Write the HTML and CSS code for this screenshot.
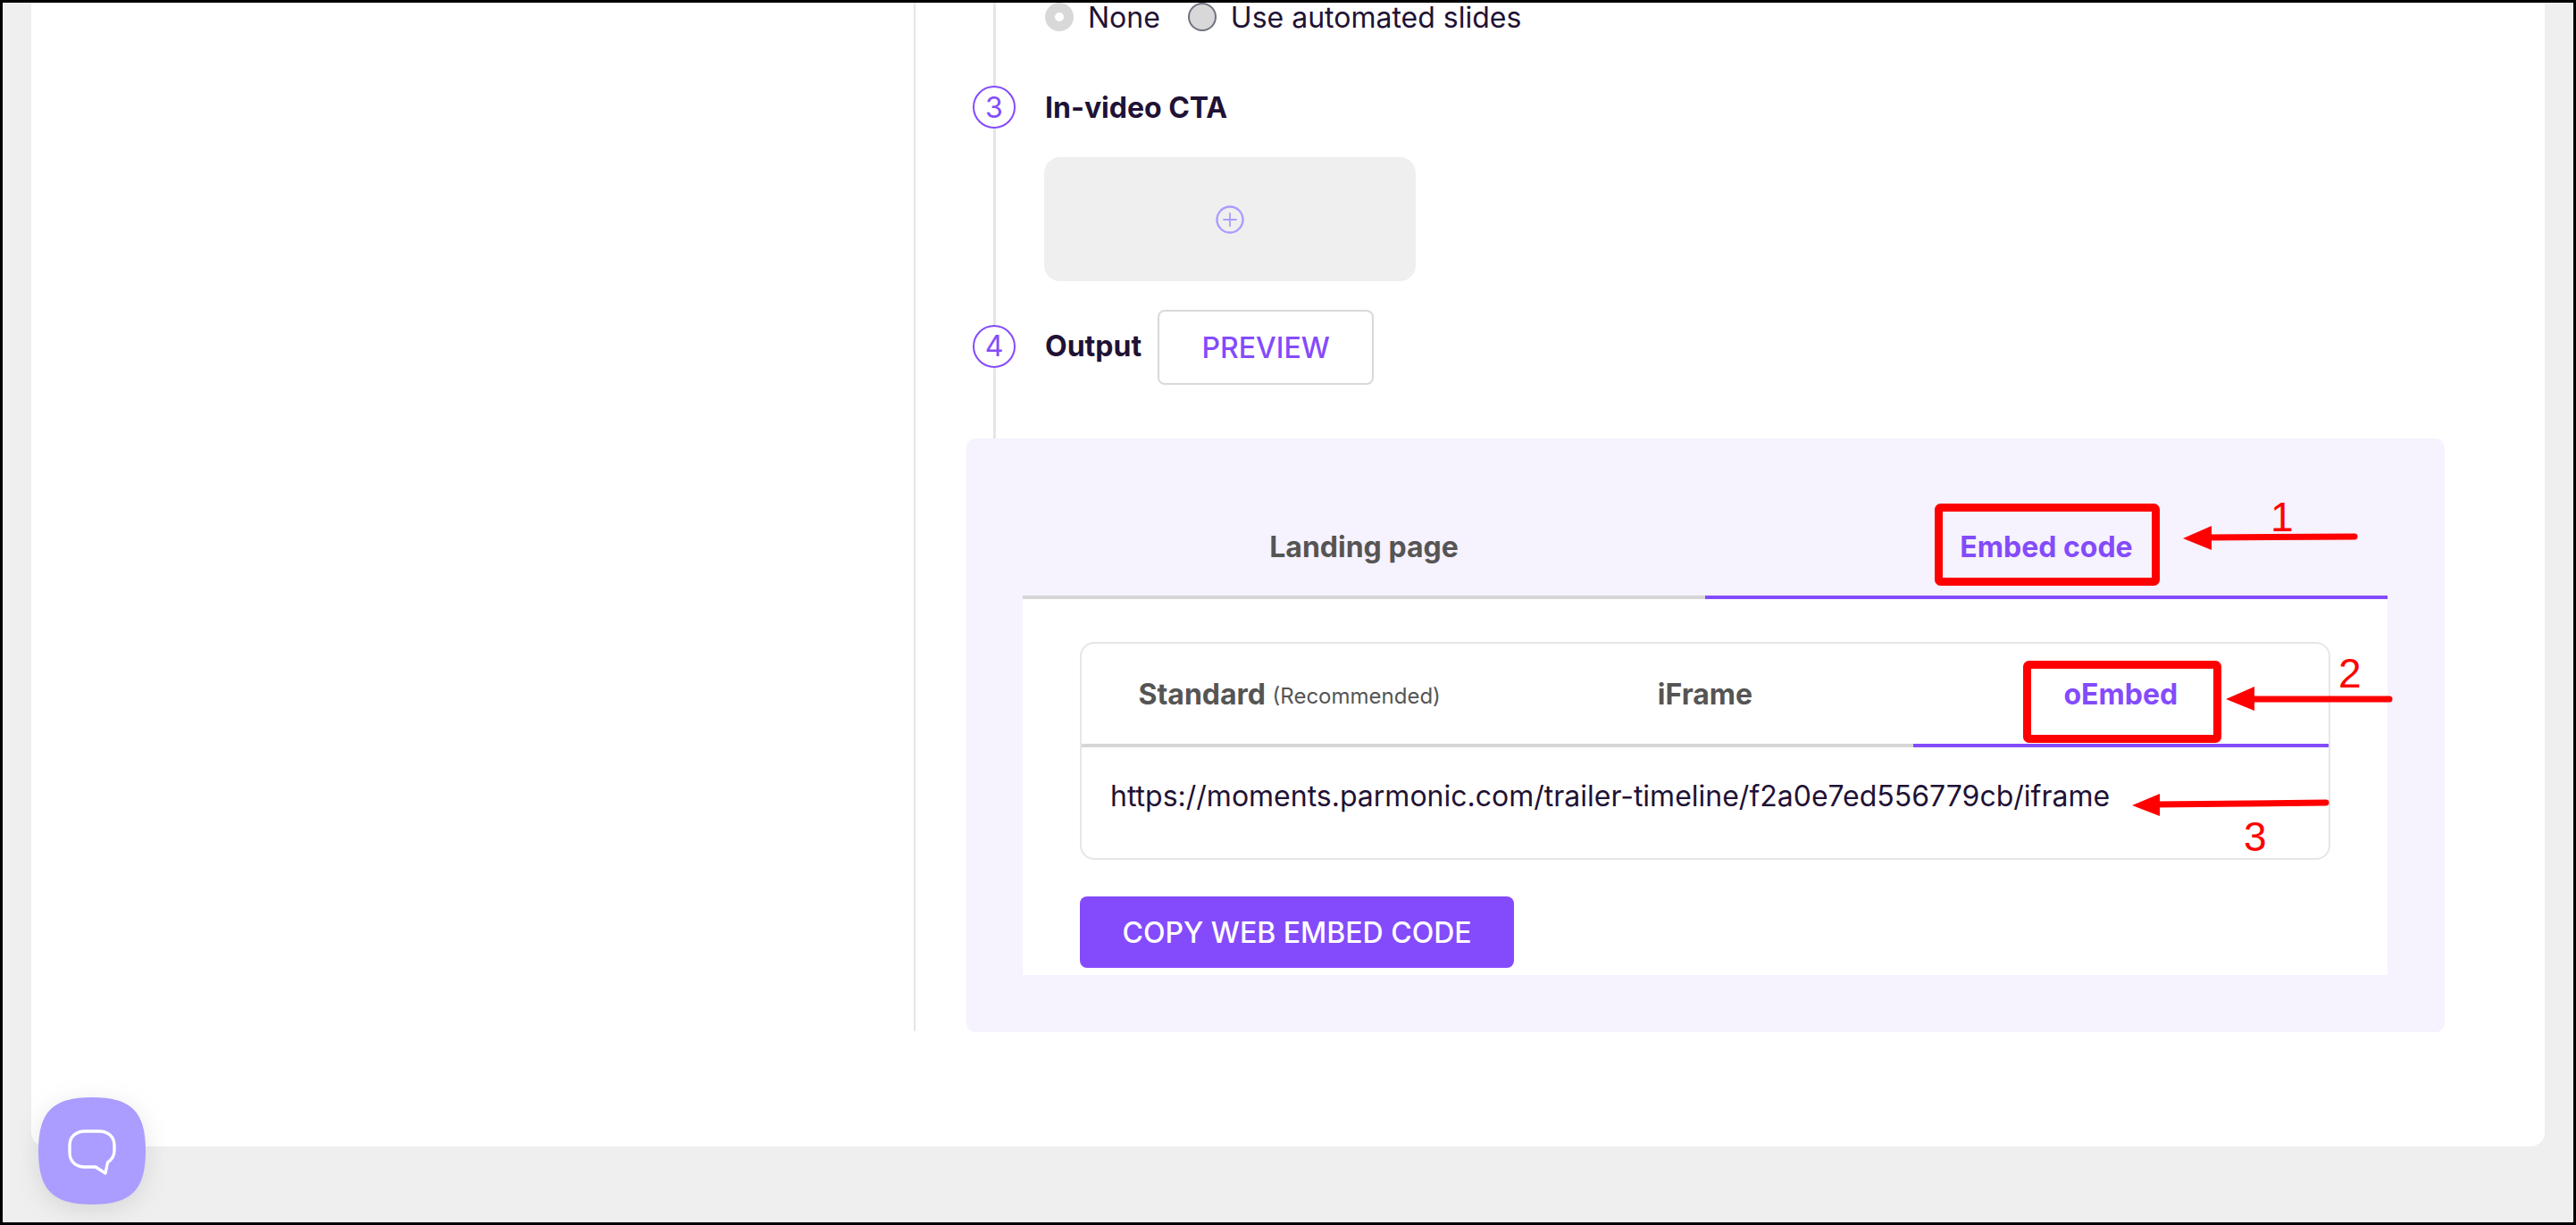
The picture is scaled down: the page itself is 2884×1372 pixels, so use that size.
FILE: index.html
```html
<!DOCTYPE html>
<html lang="en">
<head>
    <meta charset="UTF-8">
    <meta name="viewport" content="width=device-width, initial-scale=1.0">
    <title>Trailer timeline output</title>
    <link rel="stylesheet" href="styles.css">
</head>
<body>
    <div class="frame">
        <div class="card">
            <div class="editor">
                <div class="timeline">
                    <div class="radio-row">
                        <span class="radio radio-on"></span>
                        <span class="radio-label">None</span>
                        <span class="radio radio-off"></span>
                        <span class="radio-label">Use automated slides</span>
                    </div>

                    <div class="step step-cta">
                        <span class="step-num">3</span>
                        <span class="step-title">In-video CTA</span>
                    </div>
                    <div class="cta-box">
                        <svg class="plus-icon" width="32" height="32" viewBox="0 0 32 32" fill="none">
                            <circle cx="16" cy="16" r="14.5" stroke="#a99dff" stroke-width="2.4"/>
                            <path d="M16 9v14M9 16h14" stroke="#a99dff" stroke-width="1.8" stroke-linecap="round"/>
                        </svg>
                    </div>

                    <div class="step step-output">
                        <span class="step-num">4</span>
                        <span class="step-title">Output</span>
                        <button class="btn-preview">PREVIEW</button>
                    </div>
                </div>

                <div class="panel">
                    <div class="tabs">
                        <div class="tab">Landing page</div>
                        <div class="tab tab-active">Embed code</div>
                    </div>
                    <div class="panel-body">
                        <div class="embed-card">
                            <div class="tabs tabs-inner">
                                <div class="tab">Standard <small>(Recommended)</small></div>
                                <div class="tab">iFrame</div>
                                <div class="tab tab-active">oEmbed</div>
                            </div>
                            <div class="embed-url">https://moments.parmonic.com/trailer-timeline/f2a0e7ed556779cb/iframe</div>
                        </div>
                        <button class="btn-copy">COPY WEB EMBED CODE</button>
                    </div>
                </div>
            </div>
        </div>

        <!-- red markup drawn on top of the screenshot -->
        <svg class="markup" width="2884" height="1372" viewBox="0 0 2884 1372">
            <rect x="2170.5" y="568.5" width="243" height="83" rx="2" fill="none" stroke="#ff0000" stroke-width="9"/>
            <rect x="2269.5" y="744.5" width="213" height="83" rx="2" fill="none" stroke="#ff0000" stroke-width="9"/>
            <path d="M2636 601L2470 602" stroke="#ff0000" stroke-width="7" stroke-linecap="round"/>
            <path d="M2444 603L2476 589V616Z" fill="#ff0000"/>
            <path d="M2675 783L2518 783" stroke="#ff0000" stroke-width="7" stroke-linecap="round"/>
            <path d="M2492 783L2524 769V796Z" fill="#ff0000"/>
            <path d="M2604 899L2412 901" stroke="#ff0000" stroke-width="7" stroke-linecap="round"/>
            <path d="M2387 902L2418 889V914Z" fill="#ff0000"/>
            <text class="markup-num" x="2542" y="595">1</text>
            <text class="markup-num" x="2618" y="770">2</text>
            <text class="markup-num" x="2512" y="953">3</text>
        </svg>

        <div class="chat-widget">
            <svg width="120" height="120" viewBox="0 0 120 120">
                <path d="M60 0C104 0 120 16 120 60S104 120 60 120S0 104 0 60S16 0 60 0Z" fill="#aa9dff"/>
                <path d="M52 38H68C78 38 85 44 85 54V60C85 66 82 70 77.5 73L75 85L64 78H52C42 78 35 72 35 62V54C35 44 42 38 52 38Z" fill="none" stroke="#fff" stroke-width="3.4" stroke-linejoin="round"/>
            </svg>
        </div>
    </div>
</body>
</html>
```

FILE: styles.css
```css
* {
    margin: 0;
    padding: 0;
    box-sizing: border-box;
}

body {
    font-family: Inter, 'Noto Sans', sans-serif;
    color: #1f1235;
}

.frame {
    position: relative;
    width: 2884px;
    height: 1372px;
    border: 3px solid #000;
    background: #efefef;
    overflow: hidden;
}

.card {
    width: 2814px;
    height: 1281px;
    margin-left: 32px;
    background: #fff;
    border-radius: 0 0 16px 16px;
    padding-left: 988px;
}

.editor {
    height: 1152px;
    width: 1714px;
    border-left: 2px solid #e5e5ea;
    padding-left: 57px;
}

.timeline {
    height: 488px;
    margin-left: 30px;
    border-left: 3px solid #e5e5ea;
}

.radio-row {
    display: flex;
    align-items: center;
    height: 32px;
    padding-left: 55px;
    font-size: 32px;
}

.radio {
    width: 32px;
    height: 32px;
    border-radius: 50%;
    flex-shrink: 0;
}

.radio-on {
    background: #fff;
    border: 11px solid #d8d8d8;
}

.radio-off {
    background: #d8d8d8;
    border: 2px solid #6f7380;
    margin-left: 31px;
}

.radio-label {
    margin-left: 16px;
}

.step {
    display: flex;
    align-items: center;
    margin-left: -26px;
}

.step-cta {
    margin-top: 61px;
    height: 48px;
}

.step-output {
    margin-top: 32px;
    height: 84px;
}

.step-num {
    width: 48px;
    height: 48px;
    border: 2px solid #844bfc;
    border-radius: 50%;
    background: #fff;
    color: #844bfc;
    font-size: 32px;
    display: flex;
    align-items: center;
    justify-content: center;
    flex-shrink: 0;
    margin-right: 33px;
}

.step-title {
    font-size: 32px;
    font-weight: 700;
}

.step-output .step-num,
.step-output .step-title {
    margin-bottom: 3px;
}

.cta-box {
    width: 416px;
    height: 139px;
    margin: 32px 0 0 54px;
    background: #efefef;
    border-radius: 18px;
    display: flex;
    align-items: center;
    justify-content: center;
}

.btn-preview {
    width: 242px;
    height: 84px;
    margin-left: 18px;
    background: #fff;
    border: 2px solid #d9d9d9;
    border-radius: 8px;
    color: #844bfc;
    font-family: inherit;
    font-size: 32px;
    font-weight: 500;
}

.panel {
    width: 1655px;
    height: 665px;
    padding: 67px 64px 64px 63px;
    background: #f6f2fe;
    border-radius: 10px;
}

.tabs {
    display: flex;
}

.tab {
    flex: 1;
    height: 113px;
    border-bottom: 4px solid #d6d6d6;
    display: flex;
    align-items: center;
    justify-content: center;
    color: #555;
    font-size: 32px;
    font-weight: 700;
    white-space: pre;
}

.tab small {
    font-size: 24px;
    font-weight: 400;
    padding-top: 4px;
}

.tab-active {
    color: #844bfc;
    border-bottom-color: #844bfc;
}

.tabs-inner .tab {
    height: 116px;
}

.panel-body {
    height: 421px;
    padding: 48px 64px 8px;
    background: #fff;
}

.embed-card {
    height: 244px;
    border: 2px solid #e6e6ea;
    border-radius: 16px;
}

.embed-url {
    padding: 37px 32px 0;
    font-size: 32px;
    line-height: 36px;
}

.btn-copy {
    display: block;
    width: 486px;
    height: 80px;
    margin-top: 41px;
    background: #844bfc;
    border: none;
    border-radius: 8px;
    color: #fff;
    font-family: inherit;
    font-size: 32px;
    font-weight: 500;
}

.markup {
    position: absolute;
    left: -3px;
    top: -3px;
}

.markup-num {
    font-family: 'Liberation Sans', Arial, sans-serif;
    font-size: 46px;
    fill: #ff0000;
}

.chat-widget {
    position: absolute;
    left: 40px;
    top: 1226px;
    width: 120px;
    height: 120px;
    filter: drop-shadow(0 6px 14px rgba(0, 0, 0, 0.1));
}
```
